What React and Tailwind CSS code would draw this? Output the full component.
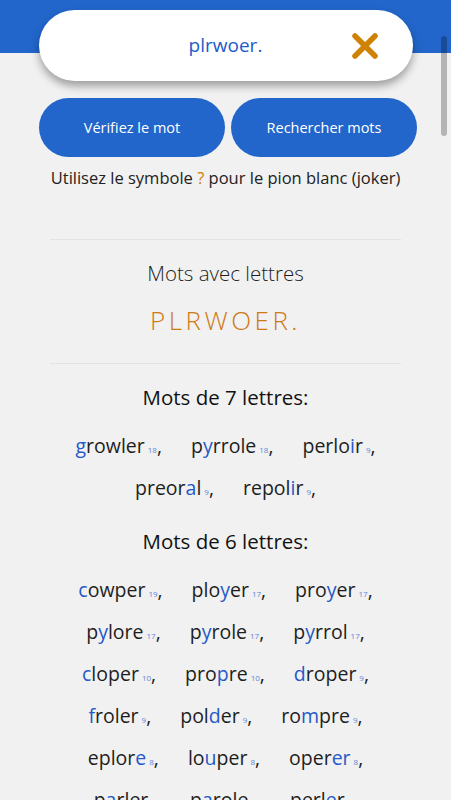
import React from "react";

const BLUE = "text-[#2459c9]";

// mots trouvés: [mot, indices des lettres joker, score]
const sevenLetters = [
  ["growler", [0], 18],
  ["pyrrole", [1], 18],
  ["perloir", [5], 9],
  ["preoral", [5], 9],
  ["repolir", [5], 9],
];

const sixLetters = [
  ["cowper", [0], 19],
  ["ployer", [3], 17],
  ["proyer", [3], 17],
  ["pylore", [1], 17],
  ["pyrole", [1], 17],
  ["pyrrol", [1], 17],
  ["cloper", [0], 10],
  ["propre", [3], 10],
  ["droper", [0], 9],
  ["froler", [0], 9],
  ["polder", [3], 9],
  ["rompre", [2], 9],
  ["eplore", [5], 8],
  ["louper", [2], 8],
  ["operer", [4, 5], 8],
  ["parler", [1], 8],
  ["parole", [1], 8],
  ["perler", [4], 8],
];

const chunk = (list, n) => {
  const rows = [];
  for (let i = 0; i < list.length; i += n) rows.push(list.slice(i, i + n));
  return rows;
};

const Word = ({ word, blanks, score }) => (
  <span className="whitespace-nowrap">
    {word.split("").map((ch, i) => (
      <span key={i} className={blanks.includes(i) ? BLUE : "text-[#1e1e1e]"}>
        {ch}
      </span>
    ))}
    <span className="ml-[3px] text-[8px] text-[#5b86d8]">{score}</span>
    <span className="text-[#1e1e1e]">,</span>
  </span>
);

const WordList = ({ words }) => (
  <div className="flex flex-col">
    {chunk(words, 3).map((row, r) => (
      <div
        key={r}
        className="flex h-[42px] items-center justify-center gap-x-[29px] text-[19.5px]"
      >
        {row.map(([w, b, s]) => (
          <Word key={w} word={w} blanks={b} score={s} />
        ))}
      </div>
    ))}
  </div>
);

export default function App() {
  return (
    <div
      className="relative h-[800px] overflow-hidden bg-[#f1f1f1]"
      style={{ fontFamily: '"Open Sans", "Noto Sans", sans-serif' }}
    >
      {/* Bandeau + champ de recherche */}
      <div className="bg-[linear-gradient(#2266cb_53px,transparent_53px)] pt-[10px]">
        <div className="relative mx-auto flex h-[71px] w-[374px] items-center justify-center rounded-full bg-white shadow-[0_5px_9px_rgba(0,0,0,0.35)]">
          <span className="text-[19px] text-[#2459c9]">plrwoer.</span>
          <svg
            className="absolute right-[34px] top-[22px]"
            width="28"
            height="28"
            viewBox="0 0 28 28"
          >
            <path
              d="M4 4 L24 24 M24 4 L4 24"
              stroke="#d08205"
              strokeWidth="5.5"
              strokeLinecap="round"
            />
          </svg>
        </div>
      </div>

      {/* Boutons */}
      <div className="mt-[17px] flex gap-[6px] pl-[39px]">
        <button className="h-[59px] w-[186px] rounded-full bg-[#2266cb] text-[14.5px] text-white">
          Vérifiez le mot
        </button>
        <button className="h-[59px] w-[186px] rounded-full bg-[#2266cb] text-[14.5px] text-white">
          Rechercher mots
        </button>
      </div>

      <p className="mt-[9px] text-center text-[16.5px] leading-[24px] text-[#222]">
        Utilisez le symbole <span className="text-[#d08205]">?</span> pour le
        pion blanc (joker)
      </p>

      <div className="mx-[50px] mt-[49px] border-t border-[#e3e3e3]" />

      <h2 className="mt-[19px] text-center text-[20.5px] font-light leading-[28px] text-[#1e1e1e]">
        Mots avec lettres
      </h2>
      <div className="mt-[15px] text-center text-[26px] font-light leading-[36px] tracking-[3.5px] text-[#cf7a12]">
        PLRWOER.
      </div>

      <div className="mx-[50px] mt-[25px] border-t border-[#e3e3e3]" />

      <h3 className="mt-[19px] text-center text-[20.5px] leading-[28px] text-[#111]">
        Mots de 7 lettres:
      </h3>
      <div className="mt-[14px]">
        <WordList words={sevenLetters} />
      </div>

      <h3 className="mt-[18px] text-center text-[20.5px] leading-[28px] text-[#111]">
        Mots de 6 lettres:
      </h3>
      <div className="mt-[14px]">
        <WordList words={sixLetters} />
      </div>

      {/* barre de défilement */}
      <div className="absolute right-[4px] top-[36px] h-[100px] w-[6px] rounded-full bg-black/25" />
    </div>
  );
}
